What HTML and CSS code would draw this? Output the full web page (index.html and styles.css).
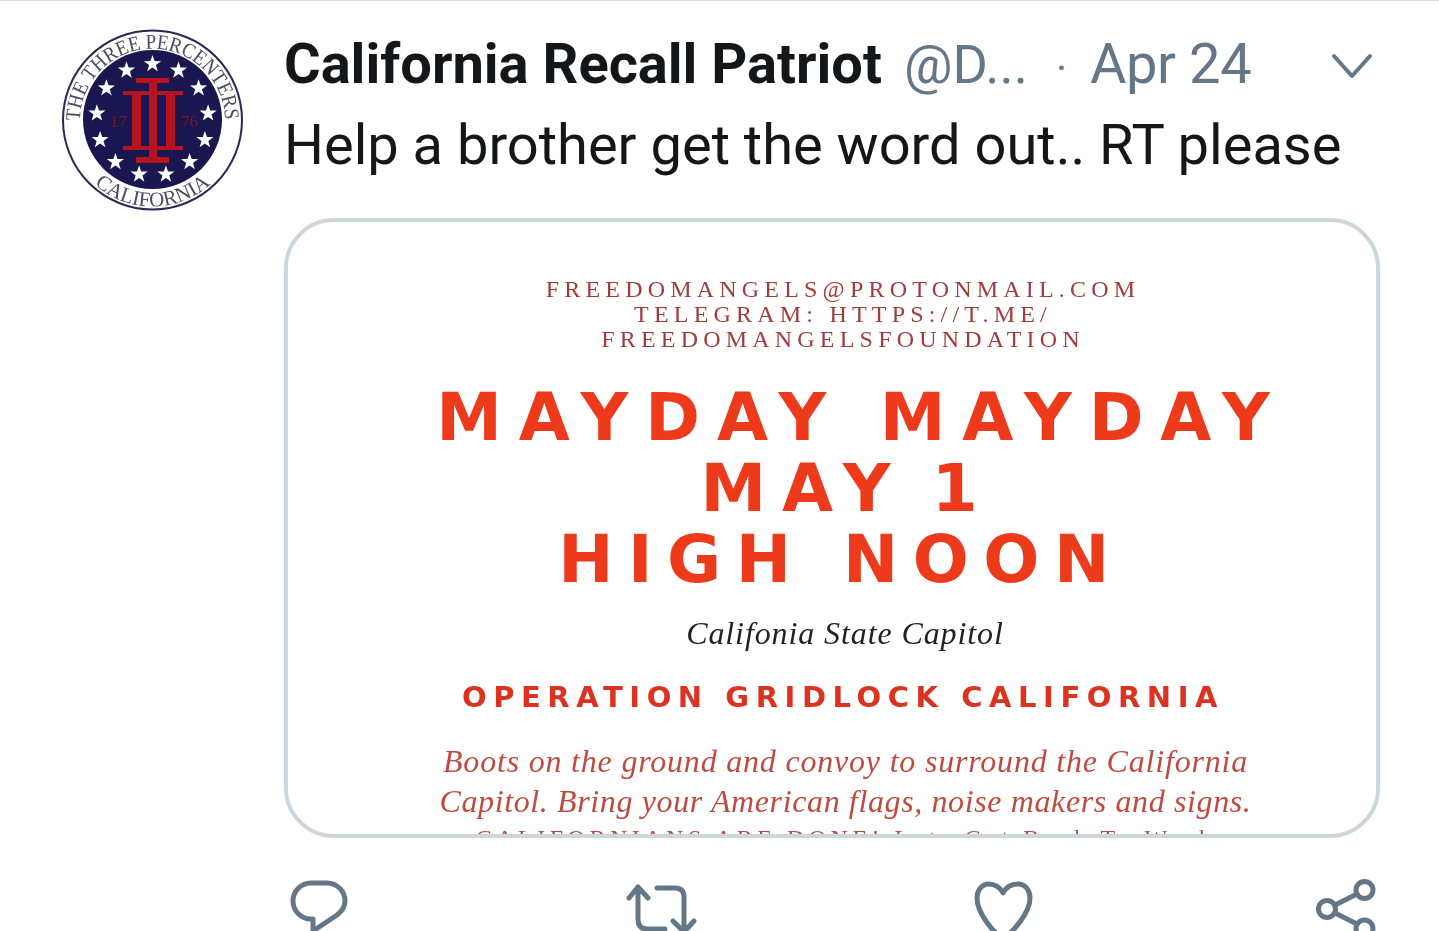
FILE: index.html
```html
<!DOCTYPE html>
<html lang="en">
<head>
<meta charset="utf-8">
<title>California Recall Patriot</title>
<link rel="stylesheet" href="styles.css">
</head>
<body>
<main class="tweet">
  <div class="avatar-col">
    <svg class="avatar" viewBox="60 26 186 186" width="186" height="186" aria-label="The Three Percenters California">
      <defs>
        <path id="ring-top" d="M80 120 A72.5 72.5 0 0 1 225 120"/>
        <path id="ring-bottom" d="M66 119 A86.5 86.5 0 0 0 239 119"/>
        <polygon id="star" points="0,-9 2.1,-2.9 8.6,-2.8 3.4,1.1 5.3,7.3 0,3.6 -5.3,7.3 -3.4,1.1 -8.6,-2.8 -2.1,-2.9"/>
      </defs>
      <circle class="seal-ring" cx="152.5" cy="119" r="89.5"/>
      <circle class="seal-field" cx="152.5" cy="118.5" r="69.5"/>
      <text class="seal-text"><textPath href="#ring-top" textLength="226" lengthAdjust="spacingAndGlyphs">THE THREE PERCENTERS</textPath></text>
      <text class="seal-text"><textPath href="#ring-bottom" startOffset="50%" text-anchor="middle">CALIFORNIA</textPath></text>
      <g class="seal-stars">
        <use href="#star" x="152.5" y="63"/>
        <use href="#star" x="178.5" y="69.4"/>
        <use href="#star" x="198.6" y="87.2"/>
        <use href="#star" x="208.1" y="112.3"/>
        <use href="#star" x="204.9" y="138.9"/>
        <use href="#star" x="189.6" y="160.9"/>
        <use href="#star" x="165.9" y="173.4"/>
        <use href="#star" x="139.1" y="173.4"/>
        <use href="#star" x="115.4" y="160.9"/>
        <use href="#star" x="100.1" y="138.9"/>
        <use href="#star" x="96.9" y="112.3"/>
        <use href="#star" x="106.4" y="87.2"/>
        <use href="#star" x="126.5" y="69.4"/>
      </g>
      <g class="seal-iii">
        <rect x="136" y="77" width="33" height="5"/>
        <rect x="149" y="78" width="8" height="83"/>
        <rect x="136" y="156" width="33" height="6"/>
        <rect x="123" y="90" width="60" height="4"/>
        <rect x="123" y="145" width="60" height="4"/>
        <rect x="132" y="92" width="9" height="55"/>
        <rect x="166" y="92" width="9" height="55"/>
      </g>
      <text class="seal-year" x="110" y="126">17</text>
      <text class="seal-year" x="181" y="126">76</text>
    </svg>
  </div>
  <div class="content">
    <header class="head">
      <span class="name">California Recall Patriot</span>
      <span class="handle">@D...</span>
      <span class="dot">·</span>
      <span class="date">Apr 24</span>
      <svg class="chevron" viewBox="0 0 42 27" width="42" height="27" aria-hidden="true">
        <path d="M3 3 L21 23 L39 3"/>
      </svg>
    </header>
    <p class="body-text">Help a brother get the word out.. RT please</p>
    <article class="card">
      <div class="flyer">
        <div class="contact">
          <div class="contact-line">FREEDOMANGELS@PROTONMAIL.COM</div>
          <div class="contact-line">TELEGRAM: HTTPS://T.ME/</div>
          <div class="contact-line">FREEDOMANGELSFOUNDATION</div>
        </div>
        <div class="headline">
          <div class="headline-line headline-first">MAYDAY MAYDAY</div>
          <div class="headline-line headline-second">MAY 1</div>
          <div class="headline-line headline-third">HIGH NOON</div>
        </div>
        <div class="place">Califonia State Capitol</div>
        <div class="operation">OPERATION GRIDLOCK CALIFORNIA</div>
        <div class="blurb">
          <div class="blurb-line blurb-first">Boots on the ground and convoy to surround the California</div>
          <div class="blurb-line blurb-second">Capitol. Bring your American flags, noise makers and signs.</div>
          <div class="blurb-cut">CALIFORNIANS ARE DONE! Lets Get Back To Work</div>
        </div>
      </div>
    </article>
    <nav class="actions">
      <svg class="action" viewBox="0 0 70 70" width="70" height="70" aria-label="Reply">
        <path d="M29 44 H27 A18 18 0 0 1 27 8 H43 A18 18 0 0 1 61 26 C61 33 57 37 53 40 L29 56 Z"/>
      </svg>
      <svg class="action" viewBox="0 0 70 70" width="70" height="70" aria-label="Retweet">
        <path d="M3 23 L12 12 L22 23 M12 12 V44 Q12 54 21 54 H39"/>
        <path d="M31 13 H49 Q58 13 58 22 V57 M47 46 L58 57 L68 46"/>
      </svg>
      <svg class="action" viewBox="0 0 70 70" width="70" height="70" aria-label="Like">
        <path d="M35 18 C32 12 26 9 21 9 C14 9 9 15 9 23 C9 38 25 57 35 64 C45 57 62 38 62 23 C62 15 57 9 50 9 C44 9 38 12 35 18 Z"/>
      </svg>
      <svg class="action" viewBox="0 0 70 70" width="70" height="70" aria-label="Share">
        <circle cx="54.5" cy="15" r="8.5"/>
        <circle cx="17" cy="34" r="8.5"/>
        <circle cx="54.5" cy="53.5" r="8.5"/>
        <path d="M25 30 L47 19 M25 38 L47 49"/>
      </svg>
    </nav>
  </div>
</main>
</body>
</html>
```
FILE: styles.css
```css
* { box-sizing: border-box; }
html, body { margin: 0; height: 931px; overflow: hidden; background: #fff; }
body { font-family: Roboto, "Liberation Sans", sans-serif; color: #14171a; }

.tweet {
  display: flex;
  gap: 38px;
  height: 931px;
  padding: 23px 59px 0 60px;
  border-top: 1px solid #d5dbe0;
}
.avatar-col { flex: 0 0 186px; padding-top: 3px; }
.avatar { display: block; filter: blur(0.6px); }
.seal-ring { fill: #fff; stroke: #2a2855; stroke-width: 2; }
.seal-field { fill: #191650; }
.seal-text { font-family: "Liberation Serif", serif; font-size: 21px; fill: #4c4c60; }
.seal-stars { fill: #fff; }
.seal-iii { fill: #b4141f; }
.seal-year { font-family: "Liberation Serif", serif; font-size: 17px; fill: #6e1a32; }

.content { flex: 1; min-width: 0; }
.head {
  display: flex;
  align-items: baseline;
  height: 81px;
  font-size: 56px;
  line-height: 81px;
  white-space: nowrap;
}
.name { font-weight: 700; }
.handle { margin-left: 22px; color: #657786; font-size: 54px; }
.dot { margin-left: 28px; color: #657786; font-size: 42px; }
.date { margin-left: 23px; color: #657786; letter-spacing: -0.4px; }
.chevron {
  align-self: flex-start;
  margin: 29px 7px 0 auto;
  fill: none;
  stroke: #657786;
  stroke-width: 4;
  stroke-linecap: round;
  stroke-linejoin: round;
}
.body-text { margin: 0; font-size: 56px; line-height: 81px; white-space: nowrap; }

.card {
  height: 620px;
  margin-top: 32px;
  border: 4px solid #ccd6dd;
  border-radius: 50px;
  overflow: hidden;
  background: #fff;
}
.flyer {
  display: flex;
  flex-direction: column;
  align-items: center;
  padding: 55px 0 0 22px;
  filter: blur(0.45px);
  white-space: nowrap;
}
.contact { text-align: center; font-family: "Liberation Serif", serif; font-size: 24px; line-height: 25px; letter-spacing: 5.2px; color: #a23c3c; }
.headline { margin-top: 30px; text-align: center; font-family: "DejaVu Sans", Inter, sans-serif; font-weight: 700; font-size: 66px; line-height: 71px; letter-spacing: 14.5px; color: #ec3a1a; }
.headline-first { text-indent: 37px; letter-spacing: 16.9px; word-spacing: -3.4px; }
.headline-second { text-indent: 8px; letter-spacing: 16px; word-spacing: -14px; }
.headline-third { text-indent: -4px; }
.place { margin: 18px 0 0 4px; font-family: "Liberation Serif", serif; font-style: italic; font-size: 32px; line-height: 40px; letter-spacing: 0.9px; color: #222; }
.operation { margin-top: 26px; font-family: "DejaVu Sans", Inter, sans-serif; font-weight: 700; font-size: 29px; line-height: 36px; letter-spacing: 6.55px; color: #dc3320; }
.blurb { margin-top: 26px; padding-left: 5px; text-align: center; font-family: "Liberation Serif", serif; font-style: italic; font-size: 32px; line-height: 40px; color: #bf4a40; }
.blurb-first { letter-spacing: 0.8px; }
.blurb-second { letter-spacing: 0.62px; }
.blurb-cut { font-style: normal; font-size: 24px; line-height: 34px; letter-spacing: 4.5px; }

.actions {
  display: flex;
  justify-content: space-between;
  margin-top: 37px;
}
.action {
  display: block;
  overflow: visible;
  fill: none;
  stroke: #657786;
  stroke-width: 5;
  stroke-linecap: round;
  stroke-linejoin: round;
}
```
